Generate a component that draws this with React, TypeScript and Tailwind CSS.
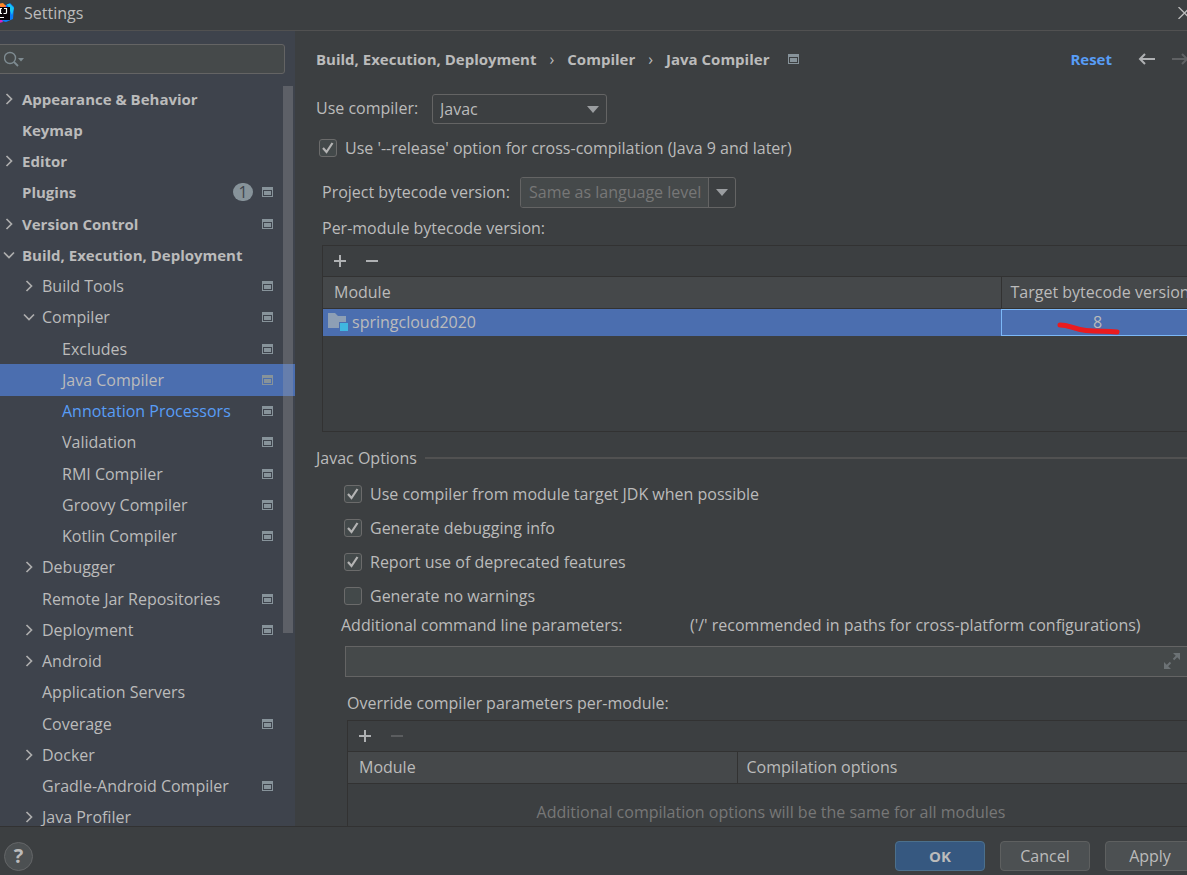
import { useState, type ReactNode } from 'react'
import clsx from 'clsx'

type TreeItem = {
  label: string
  level: number
  arrow?: 'open' | 'closed'
  project?: boolean
  badge?: number
  link?: boolean
}

const TREE: TreeItem[] = [
  { label: 'Appearance & Behavior', level: 0, arrow: 'closed' },
  { label: 'Keymap', level: 0 },
  { label: 'Editor', level: 0, arrow: 'closed' },
  { label: 'Plugins', level: 0, project: true, badge: 1 },
  { label: 'Version Control', level: 0, arrow: 'closed', project: true },
  { label: 'Build, Execution, Deployment', level: 0, arrow: 'open' },
  { label: 'Build Tools', level: 1, arrow: 'closed', project: true },
  { label: 'Compiler', level: 1, arrow: 'open', project: true },
  { label: 'Excludes', level: 2, project: true },
  { label: 'Java Compiler', level: 2, project: true },
  { label: 'Annotation Processors', level: 2, project: true, link: true },
  { label: 'Validation', level: 2, project: true },
  { label: 'RMI Compiler', level: 2, project: true },
  { label: 'Groovy Compiler', level: 2, project: true },
  { label: 'Kotlin Compiler', level: 2, project: true },
  { label: 'Debugger', level: 1, arrow: 'closed' },
  { label: 'Remote Jar Repositories', level: 1, project: true },
  { label: 'Deployment', level: 1, arrow: 'closed', project: true },
  { label: 'Android', level: 1, arrow: 'closed' },
  { label: 'Application Servers', level: 1 },
  { label: 'Coverage', level: 1, project: true },
  { label: 'Docker', level: 1, arrow: 'closed' },
  { label: 'Gradle-Android Compiler', level: 1, project: true },
  { label: 'Java Profiler', level: 1, arrow: 'closed' },
]

const INDENT = ['pl-0.5', 'pl-[22px]', 'pl-[42px]']

function ProjectIcon() {
  return (
    <svg width="11" height="10" viewBox="0 0 11 10" className="shrink-0" aria-hidden="true">
      <path d="M0 0h11v10H0zM1 3v6h9V3z" fill="#87939a" fillRule="evenodd" />
      <path d="M2 4h7v4H2z" fill="#87939a" />
    </svg>
  )
}

function TreeArrow({ state }: { state?: 'open' | 'closed' }) {
  return (
    <svg width="14" height="14" viewBox="0 0 14 14" fill="none" stroke="#adadad" strokeWidth="1.700" className="shrink-0" aria-hidden="true">
      {state === 'closed' && <path d="M4.500 2l5 5-5 5" />}
      {state === 'open' && <path d="M2 4.500l5 5 5-5" />}
    </svg>
  )
}

function Triangle({ className }: { className?: string }) {
  return (
    <svg width="12" height="7" viewBox="0 0 12 7" className={className} aria-hidden="true">
      <path d="M0 0h12L6 7z" fill="#9a9da0" />
    </svg>
  )
}

function PlusIcon() {
  return (
    <svg width="14" height="14" viewBox="0 0 14 14" aria-hidden="true">
      <path d="M6 1h2v5h5v2H8v5H6V8H1V6h5z" fill="currentColor" />
    </svg>
  )
}

function MinusIcon() {
  return (
    <svg width="14" height="14" viewBox="0 0 14 14" aria-hidden="true">
      <path d="M1 6h12v2H1z" fill="currentColor" />
    </svg>
  )
}

function Logo() {
  return (
    <svg width="20" height="20" viewBox="0 0 20 20" aria-hidden="true">
      <path d="M0 3l6-2 6 2-1 8-11 4z" fill="#ff318c" />
      <path d="M3 1l5-1 3 3-4 2z" fill="#ff8a2a" />
      <path d="M11 2l4-2 4 4-1 12-7 3-8-2 8-4z" fill="#087cfa" />
      <path d="M12 1l3 0 4 4-2 7z" fill="#19c5f2" />
      <path d="M0 16l6-1 2 4-4 1z" fill="#d425c8" />
      <path d="M1 4h14v13H1z" fill="#0b0508" />
      <path d="M4 5.500h3M5.500 5.500v5M4 10.500h3M9 5.500h2.500v4q0 1-1 1H8.500M4 14.500h5" stroke="#fff" strokeWidth="1.200" fill="none" />
    </svg>
  )
}

function Checkbox({ id, label, defaultChecked }: { id: string; label: string; defaultChecked?: boolean }) {
  return (
    <div className="flex h-[34px] items-center">
      <span className="relative flex">
        <input
          id={id}
          type="checkbox"
          defaultChecked={defaultChecked}
          className="peer size-[18px] appearance-none rounded-[3px] border border-[#6b6b6b] bg-[#43494a]"
        />
        <svg width="18" height="18" viewBox="0 0 18 18" fill="none" className="pointer-events-none absolute inset-0 hidden peer-checked:block" aria-hidden="true">
          <path d="M4 9l3.500 4L13.500 4" stroke="#b4b4b4" strokeWidth="2.200" />
        </svg>
      </span>
      <label htmlFor={id} className="pl-2">{label}</label>
    </div>
  )
}

function Toolbar({ canRemove }: { canRemove?: boolean }) {
  return (
    <div className="flex h-[31px] items-center gap-[18px] border-b border-[#323232] pl-2.5 text-[#afb1b3]">
      <button aria-label="Add"><PlusIcon /></button>
      <button aria-label="Remove" disabled={!canRemove} className="disabled:text-[#5b5d5f]"><MinusIcon /></button>
    </div>
  )
}

function HeaderCell({ children, className }: { children: ReactNode; className?: string }) {
  return (
    <th className={clsx('h-[31px] border-b border-[#323232] bg-[#45484a] p-0 text-left font-normal whitespace-nowrap', className)}>
      {children}
    </th>
  )
}

function Sidebar() {
  const [selected, setSelected] = useState('Java Compiler')

  return (
    <aside className="flex w-[295px] shrink-0 flex-col overflow-hidden bg-[#3e434c] pt-[13px]">
      <div className="relative -ml-1 mr-2.5">
        <input
          type="search"
          aria-label="Search settings"
          className="block h-[30px] w-full rounded-[3px] border border-[#646464] bg-[#45494a] pl-8 outline-none"
        />
        <svg width="22" height="18" viewBox="0 0 22 18" fill="none" className="pointer-events-none absolute top-1.5 left-2" aria-hidden="true">
          <circle cx="6" cy="8" r="5.500" stroke="#7e8b91" strokeWidth="1.400" />
          <path d="M10 12l4 4" stroke="#7e8b91" strokeWidth="1.800" />
          <path d="M14 8h6l-3 3.500z" fill="#7e8b91" />
        </svg>
      </div>

      <div className="relative mt-[9px] min-h-0 flex-1 overflow-hidden">
        <ul className="grid h-[750px] auto-rows-fr">
          {TREE.map(item => (
            <li key={item.label} className="flex">
              <button
                onClick={() => setSelected(item.label)}
                className={clsx(
                  'flex w-full items-center gap-1.5 pr-[22px] text-left whitespace-nowrap',
                  INDENT[item.level],
                  item.level === 0 && 'text-[15px] font-bold',
                  item.link && 'text-[#589df6]',
                  selected === item.label && 'bg-[#4b6eaf]',
                )}
              >
                <TreeArrow state={item.arrow} />
                <span className="flex-1">{item.label}</span>
                {item.badge && (
                  <span className="mr-[3px] flex h-[18px] w-5 items-center justify-center rounded-full bg-[#87939a] text-base font-normal text-[#3e434c]">
                    {item.badge}
                  </span>
                )}
                {item.project && <ProjectIcon />}
              </button>
            </li>
          ))}
        </ul>
        {/* scrollbar thumb */}
        <div className="absolute top-[3px] right-0.5 h-[547px] w-2.5 bg-[#a6a6a6]/30" />
      </div>
    </aside>
  )
}

function CompilerPage() {
  return (
    <main className="-mr-2 min-w-0 flex-1 overflow-hidden pl-[21px]">
      <div className="flex h-[57px] items-center pb-0.5 text-[15px] font-bold whitespace-nowrap">
        <nav className="flex items-center gap-[13px]" aria-label="Breadcrumb">
          <a href="#build">Build, Execution, Deployment</a>
          <span className="text-base font-normal">›</span>
          <a href="#compiler">Compiler</a>
          <span className="text-base font-normal">›</span>
          <a href="#java-compiler" className="pr-1.5">Java Compiler</a>
          <ProjectIcon />
        </nav>
        <a href="#reset" className="ml-auto text-[#589df6]">Reset</a>
        <button aria-label="Back" className="ml-[26px] text-[#afb1b3]">
          <svg width="17" height="12" viewBox="0 0 17 12" fill="none" stroke="currentColor" strokeWidth="2" aria-hidden="true">
            <path d="M17 6H2M7 1L2 6l5 5" />
          </svg>
        </button>
        <button aria-label="Forward" disabled className="mr-1.5 ml-[17px] text-[#5f6163]">
          <svg width="17" height="12" viewBox="0 0 17 12" fill="none" stroke="currentColor" strokeWidth="2" aria-hidden="true">
            <path d="M0 6h15M10 1l5 5-5 5" />
          </svg>
        </button>
      </div>

      <div className="mt-1.5 flex h-[30px] items-center">
        <label htmlFor="compiler" className="w-[116px] pb-0.5">Use compiler:</label>
        <div className="relative">
          <select id="compiler" className="block h-[30px] w-[175px] appearance-none rounded-[3px] border border-[#646464] bg-[#3c3f41] pl-[7px] outline-none">
            <option>Javac</option>
            <option>Eclipse</option>
            <option>Ajc</option>
          </select>
          <Triangle className="pointer-events-none absolute top-3 right-2" />
        </div>
      </div>

      <div className="py-[7px] pl-[3px]">
        <Checkbox id="release" label="Use '--release' option for cross-compilation (Java 9 and later)" defaultChecked />
      </div>

      <div className="mt-[5px] flex h-[31px] items-center pl-1.5">
        <label htmlFor="bytecode" className="w-[198px] pb-0.5">Project bytecode version:</label>
        <div className="flex h-[31px] w-[216px] rounded-[3px] border border-[#646464]">
          <input
            id="bytecode"
            placeholder="Same as language level"
            className="min-w-0 flex-1 rounded-l-[2px] border-r border-[#646464] bg-[#45494a] pb-0.5 pl-2 outline-none placeholder:text-[#777777]"
          />
          <button aria-label="Show versions" className="flex w-[26px] items-center justify-center">
            <Triangle />
          </button>
        </div>
      </div>

      <div className="flex h-[37px] items-center pt-0.5 pl-1.5">Per-module bytecode version:</div>

      <section className="ml-1.5 h-[187px] border border-[#323232]">
        <Toolbar canRemove />
        <table className="w-full table-fixed border-collapse">
          <thead>
            <tr>
              <HeaderCell className="pl-[11px]">Module</HeaderCell>
              <HeaderCell className="w-[193px] border-l pl-[9px]">Target bytecode version</HeaderCell>
            </tr>
          </thead>
          <tbody>
            <tr className="h-[27px] bg-[#4b6eaf]">
              <td className="p-0">
                <div className="flex items-center gap-1 pl-[5px]">
                  <svg width="20" height="18" viewBox="0 0 20 18" aria-hidden="true">
                    <path d="M0 0h7l3 3h8v6h-7v6H0z" fill="#8d9fb5" />
                    <path d="M12 10h8v8h-8z" fill="#40b6e0" />
                  </svg>
                  springcloud2020
                </div>
              </td>
              <td className="p-0">
                <div className="relative flex h-[27px] items-center justify-center border border-[#7cb8f7]">
                  8
                  <svg width="64" height="14" viewBox="0 0 64 14" fill="none" className="pointer-events-none absolute top-[11px] left-[54px]" aria-hidden="true">
                    <path d="M4 4C14 4 16 8 30 9.500s20 0 31 1.500" stroke="#ea1b1f" strokeWidth="5" strokeLinecap="round" />
                  </svg>
                </div>
              </td>
            </tr>
          </tbody>
        </table>
      </section>

      <fieldset>
        <legend className="flex h-[45px] w-full items-center gap-2 pt-1.5">
          Javac Options
          <span className="h-0.5 flex-1 bg-[#515151]" />
        </legend>
        <div className="pl-7">
          <Checkbox id="target-jdk" label="Use compiler from module target JDK when possible" defaultChecked />
          <Checkbox id="debug-info" label="Generate debugging info" defaultChecked />
          <Checkbox id="deprecated" label="Report use of deprecated features" defaultChecked />
          <Checkbox id="no-warnings" label="Generate no warnings" />
        </div>

        <div className="flex h-[33px] items-center pb-2.5 pl-[25px] whitespace-nowrap">
          <label htmlFor="params" className="w-[349px]">Additional command line parameters:</label>
          <span>('/' recommended in paths for cross-platform configurations)</span>
        </div>
        <div className="relative pl-[29px]">
          <input id="params" className="block h-[31px] w-full border border-[#646464] bg-[#45494a] px-2 outline-none" />
          <button aria-label="Expand" className="absolute top-[7px] right-[15px]">
            <svg width="16" height="16" viewBox="0 0 16 16" fill="#6c7275" stroke="#6c7275" strokeWidth="2" aria-hidden="true">
              <path d="M9.500 6.500L13 3M6.500 9.500L3 13" />
              <path d="M9 0h7v7zM0 9v7h7z" stroke="none" />
            </svg>
          </button>
        </div>

        <div className="flex h-[43px] items-center pt-2 pl-[31px]">Override compiler parameters per-module:</div>
        <div className="ml-[31px] border border-[#323232]">
          <Toolbar />
          <table className="w-full table-fixed border-collapse">
            <thead>
              <tr>
                <HeaderCell className="w-[389px] pl-[11px]">Module</HeaderCell>
                <HeaderCell className="border-l pl-[9px]">Compilation options</HeaderCell>
              </tr>
            </thead>
            <tbody>
              <tr>
                <td colSpan={2} className="h-[58px] p-0 text-center text-[#777777]">
                  Additional compilation options will be the same for all modules
                </td>
              </tr>
            </tbody>
          </table>
        </div>
      </fieldset>
    </main>
  )
}

export default function App() {
  return (
    <div className="flex h-screen flex-col overflow-hidden bg-[#3c3f41] font-['Open_Sans','Noto_Sans',sans-serif] text-base leading-5 text-[#bbbbbb]">
      <header className="-mr-1 flex h-[31px] shrink-0 items-center border-b border-[#515151] pb-1">
        <div className="-ml-[5px] w-[29px]"><Logo /></div>
        <h1>Settings</h1>
        <button aria-label="Close" className="ml-auto">
          <svg width="13" height="12" viewBox="0 0 13 12" fill="none" stroke="#bbbbbb" strokeWidth="1.300" aria-hidden="true">
            <path d="M0.500 0l12 12M12.500 0l-12 12" />
          </svg>
        </button>
      </header>

      <div className="flex min-h-0 flex-1">
        <Sidebar />
        <CompilerPage />
      </div>

      <footer className="-mr-2 flex h-[49px] shrink-0 items-center gap-[15px] border-t border-[#323232] pt-2.5 pl-1">
        <button aria-label="Help" className="mr-auto flex size-[29px] items-center justify-center rounded-full border border-[#646668] bg-[#4c5052] text-xl font-bold">
          ?
        </button>
        <button className="h-[30px] w-[90px] rounded-[4px] border border-[#4c708c] bg-[#365880] text-[15px] font-bold">OK</button>
        <button className="h-[30px] w-[90px] rounded-[4px] border border-[#5e6060] bg-[#4c5052]">Cancel</button>
        <button className="h-[30px] w-[90px] rounded-[4px] border border-[#5e6060] bg-[#4c5052]">Apply</button>
      </footer>
    </div>
  )
}
